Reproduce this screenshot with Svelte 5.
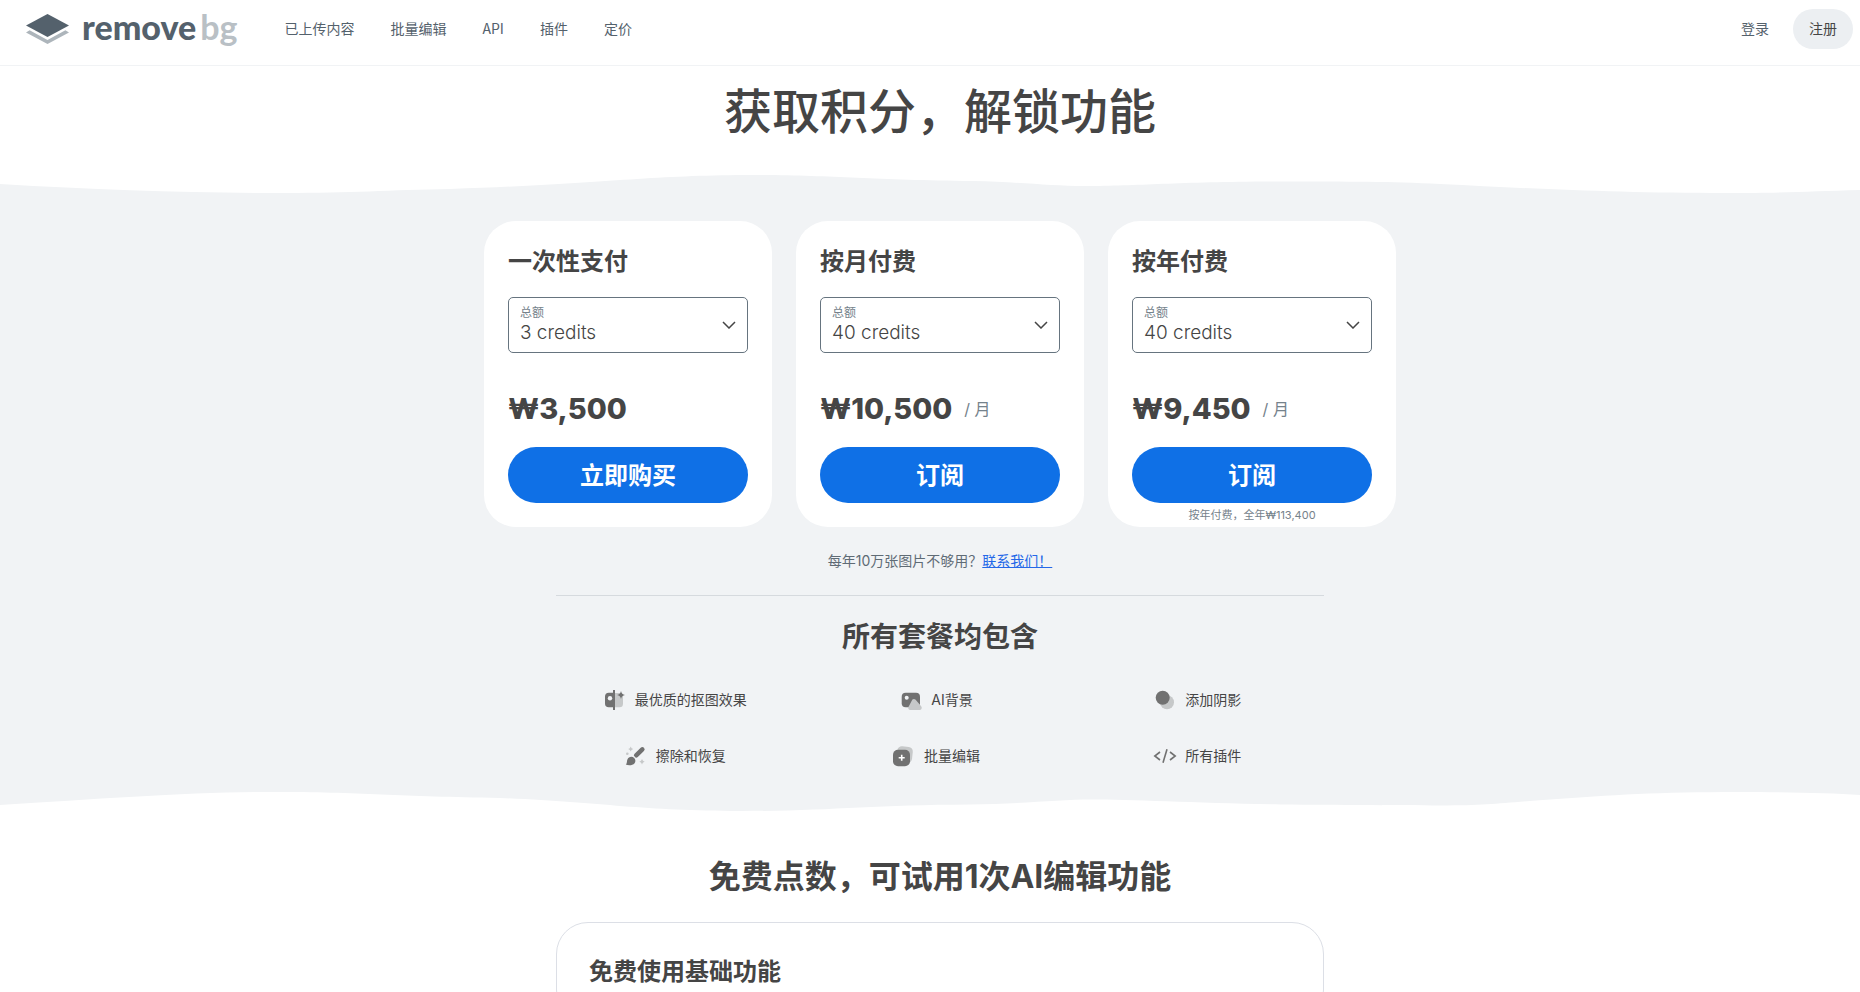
<script lang="ts">
	type Plan = {
		id: string;
		title: string;
		credits: string[];
		price: string;
		period?: string;
		action: string;
		note?: string;
	};

	const nav = ['已上传内容', '批量编辑', 'API', '插件', '定价'];

	const plans: Plan[] = [
		{ id: 'once', title: '一次性支付', credits: ['3 credits'], price: '₩3,500', action: '立即购买' },
		{
			id: 'monthly',
			title: '按月付费',
			credits: ['40 credits'],
			price: '₩10,500',
			period: '/ 月',
			action: '订阅'
		},
		{
			id: 'yearly',
			title: '按年付费',
			credits: ['40 credits'],
			price: '₩9,450',
			period: '/ 月',
			action: '订阅',
			note: '按年付费，全年₩113,400'
		}
	];

	const features = [
		{ icon: 'cutout', label: '最优质的抠图效果' },
		{ icon: 'background', label: 'AI背景' },
		{ icon: 'shadow', label: '添加阴影' },
		{ icon: 'brush', label: '擦除和恢复' },
		{ icon: 'batch', label: '批量编辑' },
		{ icon: 'code', label: '所有插件' }
	];
</script>

<header>
	<a class="logo" href="/" aria-label="remove bg">
		<svg width="43" height="30" viewBox="0 0 43 30" aria-hidden="true">
			<path d="M0 18.6 3.6 16.3 21.5 26 39.4 16.3 43 18.6 21.5 30Z" fill="#adb5bb" />
			<path d="M21.5 0 43 11.6 21.5 23 0 11.6Z" fill="#54616c" />
		</svg>
		<span class="wordmark">remove<span class="bg">bg</span></span>
	</a>
	<nav>
		{#each nav as item}
			<a href="/">{item}</a>
		{/each}
	</nav>
	<div class="account">
		<a href="/">登录</a>
		<button class="signup">注册</button>
	</div>
</header>

<main>
	<h1>获取积分，解锁功能</h1>

	<svg class="wave" viewBox="0 0 1860 20" preserveAspectRatio="none" aria-hidden="true">
		<path
			d="M0 10C100 16 190 19 285 19C350 19 390 16 450 15C600 10 650 1 753 1C830 1 870 6 973 7C1020 8 1050 12 1085 12C1140 12 1180 7.5 1281 7.5C1350 7.5 1390 7.5 1440 10C1540 15 1620 19 1726 19C1780 19 1810 17.5 1860 16V20H0Z"
		/>
	</svg>

	<section class="pricing">
		<div class="plans">
			{#each plans as plan}
				<article class="plan">
					<h3>{plan.title}</h3>
					<div class="field">
						<label for={plan.id}>总额</label>
						<select id={plan.id}>
							{#each plan.credits as option}
								<option>{option}</option>
							{/each}
						</select>
						<svg width="14" height="8" viewBox="0 0 14 8" aria-hidden="true">
							<path d="M1 1 7 7 13 1" fill="none" stroke="#454545" stroke-width="1.5" />
						</svg>
					</div>
					<p class="price">
						<strong>{plan.price}</strong>
						{#if plan.period}<span>{plan.period}</span>{/if}
					</p>
					<button class="buy">{plan.action}</button>
					<p class="note">{plan.note ?? ''}</p>
				</article>
			{/each}
		</div>

		<p class="contact">每年10万张图片不够用？<a href="/">联系我们！</a></p>

		<div class="included">
			<h2>所有套餐均包含</h2>
			<ul>
				{#each features as feature}
					<li>
						<svg width="24" height="24" viewBox="0 0 24 24" aria-hidden="true">
							{#if feature.icon === 'cutout'}
								<path class="soft" d="M12 5h4.5a3.5 3.5 0 0 1 3.5 3.5v7.3a3.5 3.5 0 0 1-3.5 3.5H12Z" />
								<path class="solid" d="M10 4.7H5.8A3.8 3.8 0 0 0 2 8.5v7a3.8 3.8 0 0 0 3.8 3.8H10V22h2V2h-2Z" />
								<circle class="hole" cx="7" cy="10.3" r="2.2" />
								<path class="solid" d="M18 3Q18.6 6.4 22 7Q18.6 7.6 18 11Q17.4 7.6 14 7Q17.4 6.4 18 3Z" />
							{:else if feature.icon === 'background'}
								<rect class="solid" x="2.7" y="4.7" width="18.3" height="14.5" rx="4" />
								<circle class="hole" cx="7.7" cy="9.7" r="2" />
								<path class="soft" d="M13.4 11.6q1.5-1.4 3 0l5.6 6.3c1.4 1.6.7 4-1.5 4h-9c-2.2 0-3-2.4-1.5-4Z" />
							{:else if feature.icon === 'shadow'}
								<circle class="soft" cx="14" cy="14.3" r="7" />
								<circle class="solid" cx="9.7" cy="9.7" r="7" />
							{:else if feature.icon === 'brush'}
								<path class="soft" d="M6.7 2.5Q7.2 4.5 9.2 5Q7.2 5.5 6.7 7.5Q6.2 5.5 4.2 5Q6.2 4.5 6.7 2.5Z" />
								<path class="soft" d="M18 15Q18.6 17.2 20.7 17.7Q18.6 18.2 18 20.4Q17.4 18.2 15.3 17.7Q17.4 17.2 18 15Z" />
								<circle class="soft" cx="3.3" cy="9.7" r="1.3" />
								<path d="M12.2 11.3 18.3 5.4" stroke="#717171" stroke-width="4.6" stroke-linecap="round" />
								<path class="solid" d="M10.2 14a4.3 4.3 0 0 1 .4 5.2C8.5 21.8 4 21.7 1.8 20.5C3.3 19.3 2.6 17.6 3.4 15.5C4.6 12.4 8.3 12.1 10.2 14Z" />
								<path d="M9 11.6 12.4 15" stroke="#f1f3f5" />
							{:else if feature.icon === 'batch'}
								<rect class="soft" x="5" y="2.5" width="15.5" height="16" rx="4.5" transform="rotate(6 12 10)" />
								<rect class="solid" x="1" y="5.7" width="17" height="16.5" rx="5" />
								<path d="M9.7 10.7v6M6.7 13.7h6" stroke="#fff" stroke-width="1.6" />
							{:else}
								<path
									d="M7 8 1.8 12 7 16M17 8 22.2 12 17 16M14 5.3 10 18.7"
									fill="none"
									stroke="#717171"
									stroke-width="1.6"
								/>
							{/if}
						</svg>
						{feature.label}
					</li>
				{/each}
			</ul>
		</div>
	</section>

	<svg class="wave" viewBox="0 0 1860 20" preserveAspectRatio="none" aria-hidden="true">
		<path
			d="M0 0H1860V4C1830 2 1790 1 1738 1C1660 1 1610 4 1550 8.5C1500 12 1490 14.5 1440 14.5C1400 14 1340 14.5 1281 13.5C1200 12 1130 8.5 1091 8.5C1060 8.5 1020 13 970 13.5C870 14 830 20 741 20C640 20 600 11 500 7C400 5.5 360 1 273 1C190 1 100 8 0 14Z"
		/>
	</svg>

	<section class="free">
		<h2>免费点数，可试用1次AI编辑功能</h2>
		<div class="free-card">
			<h3>免费使用基础功能</h3>
		</div>
	</section>
</main>

<style>
	:global(body) {
		background: #fff;
		color: #454545;
		font-family: Inter, 'Noto Sans CJK SC', sans-serif;
		font-size: 14px;
	}

	h1,
	h2,
	h3,
	p,
	ul {
		margin: 0;
		padding: 0;
	}

	button,
	select {
		font-family: inherit;
		color: inherit;
	}

	header {
		display: flex;
		align-items: flex-start;
		box-sizing: border-box;
		height: 66px;
		padding: 9px 7px 0 26px;
		border-bottom: 1px solid #f1f3f5;
		font-family: 'Noto Sans CJK SC', sans-serif;
		line-height: 38px;
	}

	header a {
		color: #54616c;
		text-decoration: none;
	}

	.logo {
		display: flex;
		align-items: center;
		gap: 13px;
		height: 40px;
	}

	.wordmark {
		padding-bottom: 4px;
		font-family: Lato, sans-serif;
		font-size: 34px;
		font-weight: 900;
		line-height: 40px;
	}

	.bg {
		margin-left: 4px;
		color: #b9c0c5;
		font-weight: 700;
	}

	nav {
		display: flex;
		gap: 36px;
		margin-left: 47px;
	}

	.account {
		display: flex;
		gap: 24px;
		margin-left: auto;
	}

	.signup {
		height: 40px;
		padding: 0 16px 2px;
		border: 0;
		border-radius: 20px;
		background: #eceff2;
		font-size: 14px;
	}

	h1 {
		padding: 17px 0 33px 20px;
		font-size: 48px;
		font-weight: 500;
		line-height: 58px;
		text-align: center;
	}

	.wave {
		display: block;
		width: 100%;
		height: 20px;
		fill: #f1f3f5;
	}

	.pricing {
		padding: 27px 0 23px 20px;
		background: #f1f3f5;
	}

	.plans {
		display: flex;
		justify-content: center;
		gap: 24px;
	}

	.plan {
		width: 240px;
		padding: 24px 24px 0;
		border-radius: 32px;
		background: #fff;
	}

	h3 {
		font-size: 24px;
		font-weight: 700;
		line-height: 34px;
	}

	.field {
		position: relative;
		margin-top: 18px;
	}

	.field label {
		position: absolute;
		top: 7px;
		left: 12px;
		color: #75828b;
		font-size: 12px;
		line-height: 18px;
	}

	.field svg {
		position: absolute;
		top: 24px;
		right: 12px;
		pointer-events: none;
	}

	select {
		display: block;
		width: 100%;
		height: 56px;
		padding: 14px 32px 0 11px;
		border: 1px solid #66747f;
		border-radius: 5px;
		appearance: none;
		background: transparent;
		font-size: 19px;
		font-weight: 300;
	}

	.price {
		display: flex;
		align-items: center;
		gap: 12px;
		margin-top: 35px;
		color: #75828b;
		font-size: 16px;
		line-height: 40px;
	}

	.price strong {
		color: #454545;
		font-size: 29px;
		font-weight: 800;
		line-height: 42px;
	}

	.buy {
		width: 100%;
		height: 56px;
		margin-top: 17px;
		padding: 0 0 3px;
		border: 0;
		border-radius: 28px;
		background: #0f70e6;
		color: #fff;
		font-size: 24px;
		font-weight: 700;
	}

	.note {
		height: 24px;
		color: #75828b;
		font-size: 11px;
		line-height: 24px;
		text-align: center;
	}

	.contact {
		margin-top: 22px;
		color: #5f6b75;
		line-height: 24px;
		text-align: center;
	}

	.contact a {
		color: #2468e8;
	}

	.included {
		max-width: 768px;
		margin: 22px auto 0;
		border-top: 1px solid #d6dade;
	}

	h2 {
		font-size: 28px;
		font-weight: 700;
		line-height: 40px;
		text-align: center;
	}

	.included h2 {
		margin-top: 21px;
	}

	ul {
		display: grid;
		grid-template-columns: repeat(3, 1fr);
		gap: 32px 16px;
		margin-top: 31px;
		list-style: none;
	}

	li {
		display: flex;
		justify-content: center;
		gap: 8px;
		padding-right: 8px;
		line-height: 24px;
	}

	.solid {
		fill: #717171;
	}

	.soft {
		fill: #c6c8c9;
	}

	.hole {
		fill: #f1f3f5;
	}

	.free {
		padding: 46px 0 32px 20px;
	}

	.free h2 {
		font-size: 32px;
	}

	.free-card {
		box-sizing: border-box;
		max-width: 768px;
		margin: 25px auto 0;
		padding: 32px;
		border: 1px solid #dcdfe6;
		border-radius: 32px;
	}
</style>
